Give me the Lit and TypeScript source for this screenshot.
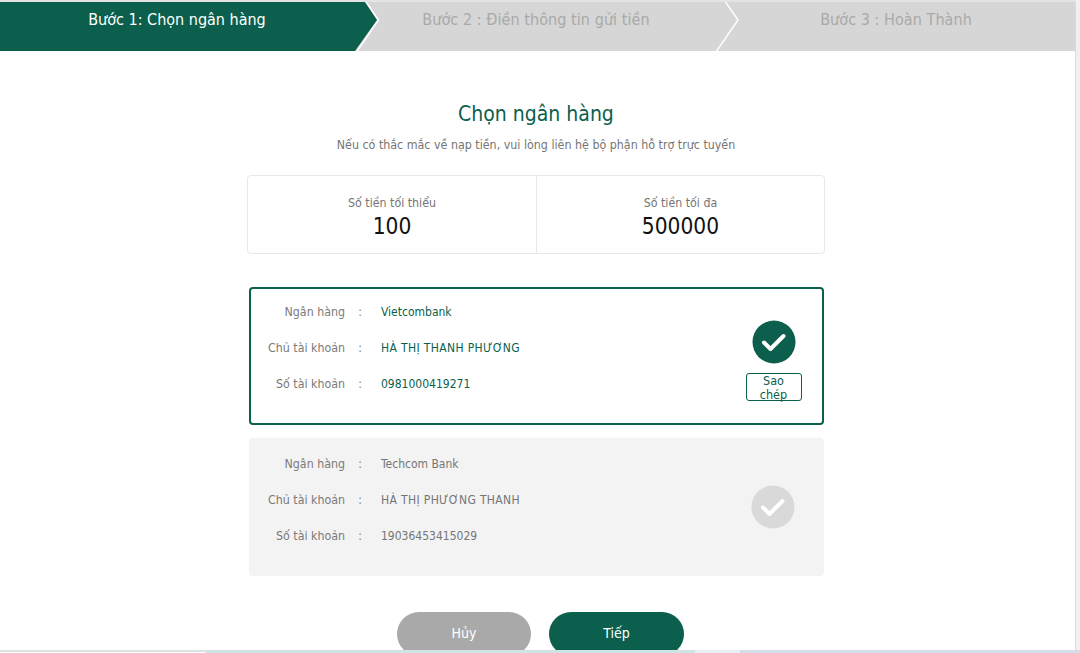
import { LitElement, html, css, svg } from "lit";
import { customElement } from "lit/decorators.js";

const check = (bg: string) => html`<svg class="check" viewBox="0 0 44 44" width="44" height="44">
  <circle cx="22" cy="22" r="21.5" fill="${bg}"></circle>
  ${svg`<path d="M12 22.5 L18.5 29 L31.5 16" fill="none" stroke="#fff" stroke-width="4" stroke-linecap="round" stroke-linejoin="round"></path>`}
</svg>`;

const FONT = css`"DejaVu Sans Condensed", "DejaVu Sans", sans-serif`;

@customElement("app-root")
export class AppRoot extends LitElement {
  static styles = css`
    :host {
      display: block;
      width: 1080px;
      height: 653px;
      overflow: hidden;
      position: relative;
      background: #f0f0f0;
      font-family: ${FONT};
      font-stretch: condensed;
    }
    .page {
      width: 1076px;
      height: 653px;
      overflow: hidden;
      background: #fff;
      border-right: 1px solid #dcdcdc;
      border-top: 2px solid #e4e4e4;
      box-sizing: border-box;
    }
    .steps-wrap { position: relative; height: 49px; background: #d6d6d6; }
    .steps-wrap svg { position: absolute; inset: 0; }
    .labels { position: relative; display: grid; grid-template-columns: 354px 364px 356px; height: 49px; font-size: 16px; }
    .labels span { line-height: 36px; text-align: center; color: #a9a9a9; letter-spacing: 0.06px; }
    .labels span.on { color: #fff; letter-spacing: 0; }
    h1 {
      margin: 49px 0 0;
      width: 1072px;
      text-align: center;
      font-weight: 400;
      font-size: 21px;
      line-height: 28px;
      color: #0b5f4c;
    }
    .sub {
      margin: 8px 0 0;
      width: 1072px;
      text-align: center;
      font-size: 12.35px;
      line-height: 18px;
      color: #757575;
    }
    .limits {
      margin: 21px 0 0 247px;
      width: 578px;
      height: 79px;
      box-sizing: border-box;
      border: 1px solid #e8e8e8;
      border-radius: 4px;
      display: grid;
      grid-template-columns: 288px 1fr;
    }
    .limit { display: flex; flex-direction: column; align-items: center; padding-top: 19px; }
    .limit + .limit { border-left: 1px solid #e8e8e8; }
    .limit small { font-size: 12.3px; line-height: 16px; color: #757575; }
    .limit b { font-weight: 400; font-size: 22.5px; line-height: 30px; color: #111; }
    .accounts { margin: 33px 0 0 249px; width: 575px; display: flex; flex-direction: column; gap: 13px; }
    .card {
      height: 138px;
      box-sizing: border-box;
      border-radius: 4px;
      display: flex;
      align-items: flex-start;
    }
    .card.sel { border: 2px solid #0b5f4c; background: #fff; color: #0b5f4c; padding-top: 5px; }
    .card.off { background: #f3f3f3; color: #757575; padding-top: 8px; padding-left: 2px; }
    .rows { display: grid; grid-template-columns: 94px 36px auto; grid-auto-rows: 36px; align-items: center; justify-content: start; flex: 1; font-size: 12px; }
    .k { text-align: right; color: #7a7a7a; font-size: 12.3px; }
    .c { text-align: center; color: #7a7a7a; padding-right: 6px; }
    .up { letter-spacing: 0.36px; }
    .side { width: 100px; box-sizing: border-box; display: flex; flex-direction: column; align-items: center; }
    .sel .side { padding-top: 26px; padding-left: 3px; }
    .off .side { padding-top: 39px; padding-right: 2px; }
    .check { display: block; }
    .copy {
      margin-top: 9px;
      width: 56px;
      height: 28px;
      box-sizing: border-box;
      border: 1px solid #0b5f4c;
      border-radius: 3px;
      background: #fff;
      padding: 0 10px;
      font: 12.5px/14px ${FONT};
      font-stretch: condensed;
      color: #0b5f4c;
    }
    .btns { margin: 36px 0 0; padding-left: 397px; display: flex; gap: 18px; }
    .btn {
      width: 135px;
      height: 44px;
      border-radius: 22px;
      border: 0;
      font: 14px/42px ${FONT};
      font-stretch: condensed;
      color: #fff;
      padding: 0 0 2px;
    }
    .btn.cancel { background: #a9a9a9; width: 134px; }
    .btn.next { background: #0b5f4c; }
    .strip {
      position: absolute;
      left: 0;
      right: 0;
      bottom: 0;
      height: 3px;
      display: grid;
      grid-template-columns: 205px 490px 45px 1fr;
    }
    .strip .a { background: linear-gradient(#e0e0e0 66%, #fff 66%); }
    .strip .b { background: #cfe2e6; }
    .strip .c2 { background: #e9edf4; }
    .strip .d { background: #d4dde8; }
  `;

  private account(sel: boolean, bank: string, owner: string, no: string) {
    return html`<div class="card ${sel ? "sel" : "off"}">
      <div class="rows">
        <span class="k">Ngân hàng</span><span class="c">:</span><span>${bank}</span>
        <span class="k">Chủ tài khoản</span><span class="c">:</span><span class="up">${owner}</span>
        <span class="k">Số tài khoản</span><span class="c">:</span><span>${no}</span>
      </div>
      <div class="side">
        ${check(sel ? "#0b5f4c" : "#d9d9d9")}
        ${sel ? html`<button class="copy">Sao chép</button>` : ""}
      </div>
    </div>`;
  }

  render() {
    return html`<div class="page">
      <div class="steps-wrap">
        <svg width="1075" height="49" viewBox="0 0 1075 49">
          <polygon points="0,0 365,0 377,18 355,49 0,49" fill="#0b5f4c"></polygon>
          <polyline points="365.5,-1 378.5,18 356.5,50" fill="none" stroke="#fff" stroke-width="1.5"></polyline>
          <polyline points="725,-1 738,18 716,50" fill="none" stroke="#fff" stroke-width="1.5"></polyline>
        </svg>
        <div class="labels">
          <span class="on">Bước 1: Chọn ngân hàng</span>
          <span>Bước 2 : Điền thông tin gửi tiền</span>
          <span>Bước 3 : Hoàn Thành</span>
        </div>
      </div>
      <h1>Chọn ngân hàng</h1>
      <p class="sub">Nếu có thắc mắc về nạp tiền, vui lòng liên hệ bộ phận hỗ trợ trực tuyến</p>
      <div class="limits">
        <div class="limit"><small>Số tiền tối thiểu</small><b>100</b></div>
        <div class="limit"><small>Số tiền tối đa</small><b>500000</b></div>
      </div>
      <div class="accounts">
        ${this.account(true, "Vietcombank", "HÀ THỊ THANH PHƯƠNG", "0981000419271")}
        ${this.account(false, "Techcom Bank", "HÀ THỊ PHƯƠNG THANH", "19036453415029")}
      </div>
      <div class="btns">
        <button class="btn cancel">Hủy</button>
        <button class="btn next">Tiếp</button>
      </div>
    </div>
    <div class="strip"><i class="a"></i><i class="b"></i><i class="c2"></i><i class="d"></i></div>`;
  }
}
